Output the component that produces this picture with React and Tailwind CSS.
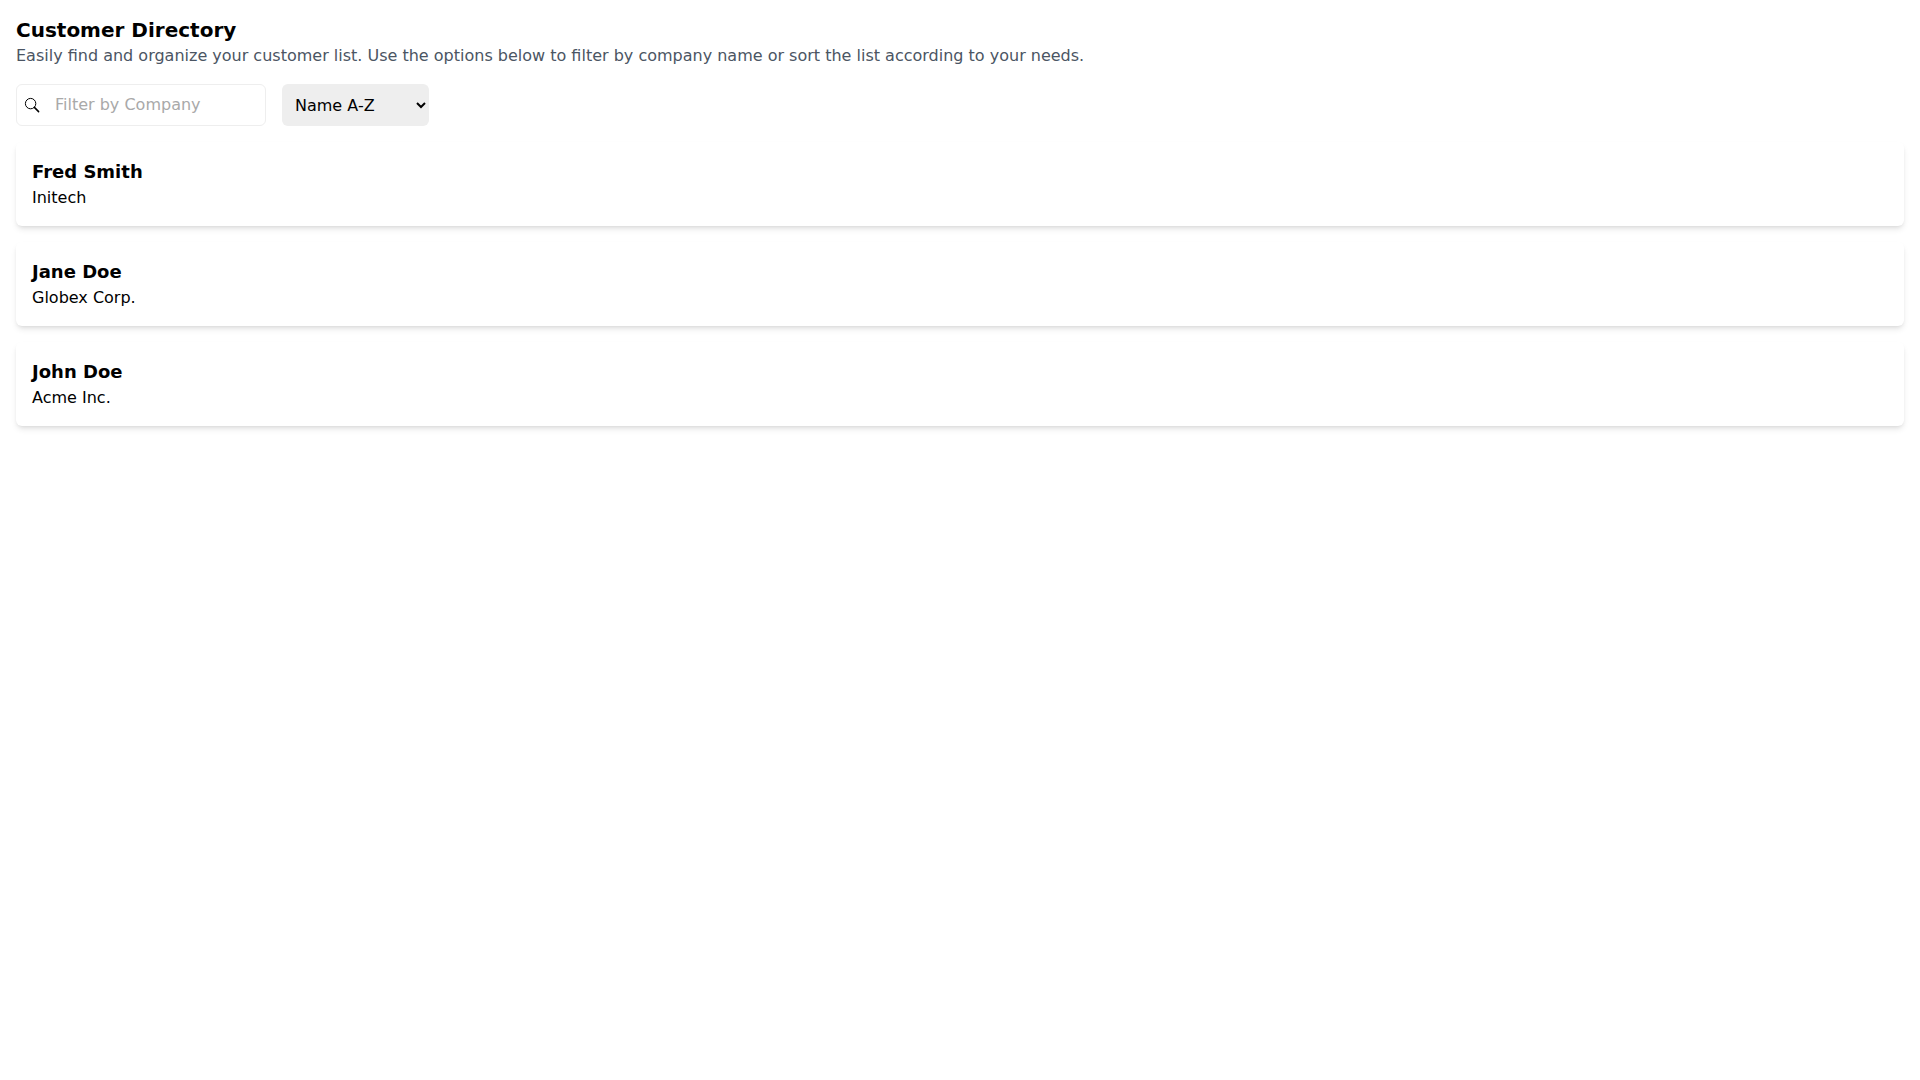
const customers = [
  { name: "Fred Smith", company: "Initech" },
  { name: "Jane Doe", company: "Globex Corp." },
  { name: "John Doe", company: "Acme Inc." },
];

const App = () => {
  return (
    <div className="min-h-screen bg-white p-4 font-['DejaVu_Sans',sans-serif] text-black">
      <h1 className="text-xl font-bold leading-7">Customer Directory</h1>
      <p className="text-base leading-6 text-[#4b5563]">
        Easily find and organize your customer list. Use the options below to filter by company name or sort the list according to your needs.
      </p>

      {/* Filter and sort */}
      <div className="mt-4 flex gap-4">
        <div className="flex h-[42px] w-[250px] items-center rounded-md border border-[#eeeeee] pl-[7px]">
          <svg width="16" height="16" viewBox="0 0 16 16" fill="none" stroke="currentColor" className="shrink-0">
            <circle cx="6.6" cy="6.6" r="5.2" strokeWidth="1" />
            <path d="M10.4 10.4L14.6 14.6" strokeWidth="1.5" strokeLinecap="round" />
          </svg>
          <input
            type="text"
            placeholder="Filter by Company"
            className="ml-[15px] w-full min-w-0 bg-transparent text-base outline-none placeholder:text-[#a9a9a9]"
          />
        </div>
        <select className="h-[42px] w-[147px] rounded-md bg-[#eeeeee] px-[9px] text-base">
          <option>Name A-Z</option>
          <option>Name Z-A</option>
        </select>
      </div>

      {/* Customer cards */}
      <div className="mt-4 flex flex-col gap-4">
        {customers.map((customer) => (
          <div key={customer.name} className="rounded-md bg-white p-4 shadow-md">
            <div className="text-lg font-bold leading-7">{customer.name}</div>
            <div className="text-base leading-6">{customer.company}</div>
          </div>
        ))}
      </div>
    </div>
  );
};

export default App;
